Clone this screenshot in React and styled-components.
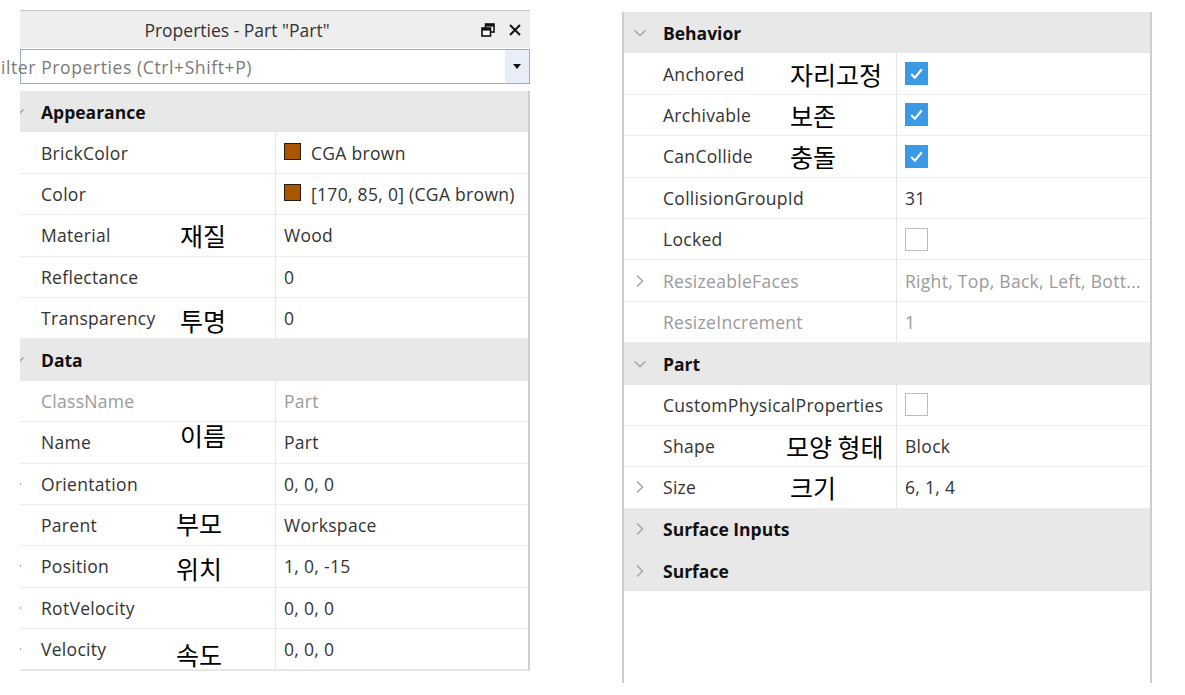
import React from "react";
import styled, { createGlobalStyle } from "styled-components";

const GlobalStyle = createGlobalStyle`
  html, body { margin: 0; padding: 0; background: #ffffff; }
  body { font-family: "Open Sans", "Noto Sans", sans-serif; color: #333; }
`;

const leftRows = [
  { type: "header", label: "Appearance", open: true },
  { label: "BrickColor", value: "CGA brown", swatch: "#aa5500" },
  { label: "Color", value: "[170, 85, 0] (CGA brown)", swatch: "#aa5500" },
  { label: "Material", note: "재질", value: "Wood" },
  { label: "Reflectance", value: "0" },
  { label: "Transparency", note: "투명", noteY: 2, value: "0" },
  { type: "header", label: "Data", open: true },
  { label: "ClassName", value: "Part", muted: true },
  { label: "Name", note: "이름", noteY: -7, value: "Part" },
  { label: "Orientation", value: "0, 0, 0", expand: true },
  { label: "Parent", note: "부모", noteX: -4, noteY: -2, value: "Workspace" },
  { label: "Position", note: "위치", noteX: -4, noteY: 2, value: "1, 0, -15", expand: true },
  { label: "RotVelocity", value: "0, 0, 0", expand: true },
  { label: "Velocity", note: "속도", noteX: -4, noteY: 5, value: "0, 0, 0", expand: true },
];

const rightRows = [
  { type: "header", label: "Behavior", open: true },
  { label: "Anchored", note: "자리고정", check: true },
  { label: "Archivable", note: "보존", check: true },
  { label: "CanCollide", note: "충돌", check: true },
  { label: "CollisionGroupId", value: "31" },
  { label: "Locked", check: false },
  { label: "ResizeableFaces", value: "Right, Top, Back, Left, Bott...", muted: true, expand: true },
  { label: "ResizeIncrement", value: "1", muted: true },
  { type: "header", label: "Part", open: true },
  { label: "CustomPhysicalProperties", check: false },
  { label: "Shape", note: "모양 형태", noteX: -4, value: "Block" },
  { label: "Size", note: "크기", value: "6, 1, 4", expand: true },
  { type: "header", label: "Surface Inputs" },
  { type: "header", label: "Surface" },
];

function Chevron({ down }) {
  return (
    <ChevronBox>
      <svg width="14" height="14" viewBox="0 0 14 14">
        {down ? (
          <path d="M1.5 4.5 L7 9.5 L12.5 4.5" fill="none" stroke="#a3a3a3" strokeWidth="1.4" />
        ) : (
          <path d="M4 1.5 L9.5 7 L4 12.5" fill="none" stroke="#a3a3a3" strokeWidth="1.4" />
        )}
      </svg>
    </ChevronBox>
  );
}

function CheckBox({ checked }) {
  return (
    <Box checked={checked}>
      {checked && (
        <svg width="17" height="17" viewBox="0 0 16 16">
          <path d="M3 8.5 L6.5 12 L13 4" fill="none" stroke="#ffffff" strokeWidth="2" />
        </svg>
      )}
    </Box>
  );
}

function PropertyList({ rows, inset, nameWidth, noteAt }) {
  return rows.map((r, i) =>
    r.type === "header" ? (
      <HeaderRow key={i}>
        <Lead inset={inset}>
          <Chevron down={r.open} />
        </Lead>
        <HeaderText>{r.label}</HeaderText>
      </HeaderRow>
    ) : (
      <Row key={i}>
        <NameCell width={nameWidth}>
          <Lead inset={inset}>{r.expand && <Chevron />}</Lead>
          <NameText width={noteAt} muted={r.muted}>{r.label}</NameText>
          {r.note && (
            <Note dx={r.noteX || 0} dy={r.noteY || 0}>
              {r.note}
            </Note>
          )}
        </NameCell>
        <ValueCell muted={r.muted}>
          {r.swatch && <Swatch color={r.swatch} />}
          {r.check !== undefined ? <CheckBox checked={r.check} /> : r.value}
        </ValueCell>
      </Row>
    )
  );
}

export default function App() {
  return (
    <>
      <GlobalStyle />
      <Page>
        <LeftPanel>
          <TitleBar>
            <Title>Properties - Part "Part"</Title>
            <TitleIcons>
              <svg width="14" height="14" viewBox="0 0 14 14">
                <rect x="4.5" y="1" width="8.5" height="8" fill="#fff" stroke="#111" strokeWidth="1.6" />
                <rect x="4.5" y="1" width="8.5" height="2.6" fill="#111" />
                <rect x="1" y="5" width="8.5" height="8" fill="#fff" stroke="#111" strokeWidth="1.6" />
                <rect x="1" y="5" width="8.5" height="2.6" fill="#111" />
              </svg>
              <svg width="14" height="14" viewBox="0 0 14 14">
                <path d="M2 2 L12 12 M12 2 L2 12" stroke="#111" strokeWidth="2" />
              </svg>
            </TitleIcons>
          </TitleBar>
          <FilterBox>
            <FilterText>ilter Properties (Ctrl+Shift+P)</FilterText>
            <DropButton>
              <svg width="8" height="5" viewBox="0 0 8 5">
                <path d="M0 0 L8 0 L4 5 Z" fill="#111" />
              </svg>
            </DropButton>
          </FilterBox>
          <ListClip>
            <PropertyList rows={leftRows} inset={-9} nameWidth={256} noteAt={139} />
          </ListClip>
        </LeftPanel>
        <RightPanel>
          <PropertyList rows={rightRows} inset={9} nameWidth={273} noteAt={127} />
        </RightPanel>
      </Page>
    </>
  );
}

const Page = styled.div`
  display: flex;
  align-items: flex-start;
  width: 1185px;
  height: 695px;
  overflow: hidden;
  background: #ffffff;
`;

const LeftPanel = styled.div`
  width: 510px;
  margin-left: 20px;
  padding-top: 10px;
  display: flex;
  flex-direction: column;
`;

const TitleBar = styled.div`
  position: relative;
  height: 38px;
  display: flex;
  align-items: center;
  justify-content: center;
  background: #eeeeee;
  border-top: 1px solid #c9c9c9;
  box-sizing: border-box;
`;

const Title = styled.span`
  font-size: 17.5px;
  color: #333;
  margin-left: -76px;
`;

const TitleIcons = styled.div`
  position: absolute;
  right: 8px;
  top: 12px;
  display: flex;
  gap: 13px;
`;

const FilterBox = styled.div`
  height: 35px;
  margin-top: 1px;
  display: flex;
  align-items: stretch;
  border: 1px solid #8eaede;
  box-sizing: border-box;
  background: #fff;
`;

const FilterText = styled.span`
  flex: 1;
  margin-left: -20px;
  display: flex;
  align-items: center;
  font-size: 17.5px;
  letter-spacing: 0.6px;
  color: #7a7a7a;
  white-space: nowrap;
`;

const DropButton = styled.div`
  width: 24px;
  display: flex;
  align-items: center;
  justify-content: center;
  background: #e7eef8;
`;

const ListClip = styled.div`
  margin-top: 7px;
  overflow: hidden;
  border-right: 2px solid #cfcfcf;
  border-bottom: 1px solid #e2e2e2;
`;

const RightPanel = styled.div`
  width: 526px;
  margin-left: 92px;
  margin-top: 12px;
  height: 671px;
  border-left: 2px solid #cdcdcd;
  border-right: 2px solid #cdcdcd;
`;

const HeaderRow = styled.div`
  height: 41.4px;
  display: flex;
  align-items: center;
  background: #e8e8e8;
  box-sizing: border-box;
`;

const HeaderText = styled.span`
  font-size: 17.5px;
  font-weight: 700;
  color: #111;
`;

const Row = styled.div`
  height: 41.4px;
  display: flex;
  align-items: stretch;
  border-bottom: 1px solid #ededed;
  box-sizing: border-box;
`;

const Lead = styled.div`
  flex: none;
  width: 14px;
  margin-left: ${(p) => p.inset}px;
  margin-right: 16px;
  display: flex;
  align-items: center;
`;

const ChevronBox = styled.span`
  display: flex;
  align-items: center;
`;

const NameCell = styled.div`
  flex: none;
  width: ${(p) => p.width}px;
  display: flex;
  align-items: center;
  border-right: 1px solid #e6e6e6;
  box-sizing: border-box;
`;

const NameText = styled.span`
  flex: none;
  width: ${(p) => p.width}px;
  font-size: 17.5px;
  letter-spacing: 0.3px;
  color: ${(p) => (p.muted ? "#9a9a9a" : "#333")};
  white-space: nowrap;
`;

const Note = styled.span`
  font-family: "Noto Sans CJK KR", sans-serif;
  font-size: 25px;
  color: #000;
  white-space: nowrap;
  transform: translate(${(p) => p.dx}px, ${(p) => p.dy}px);
`;

const ValueCell = styled.div`
  flex: 1;
  display: flex;
  align-items: center;
  gap: 10px;
  padding-left: 8px;
  font-size: 17.5px;
  letter-spacing: 0.3px;
  color: ${(p) => (p.muted ? "#9a9a9a" : "#333")};
  white-space: nowrap;
  overflow: hidden;
`;

const Swatch = styled.span`
  flex: none;
  width: 17px;
  height: 17px;
  background: ${(p) => p.color};
  border: 1.5px solid #2a1a0a;
  box-sizing: border-box;
  margin-top: -3px;
`;

const Box = styled.span`
  width: 23px;
  height: 23px;
  box-sizing: border-box;
  display: flex;
  align-items: center;
  justify-content: center;
  background: ${(p) => (p.checked ? "#3a9ae6" : "#ffffff")};
  border: 1px solid ${(p) => (p.checked ? "#3a9ae6" : "#bdbdbd")};
`;
